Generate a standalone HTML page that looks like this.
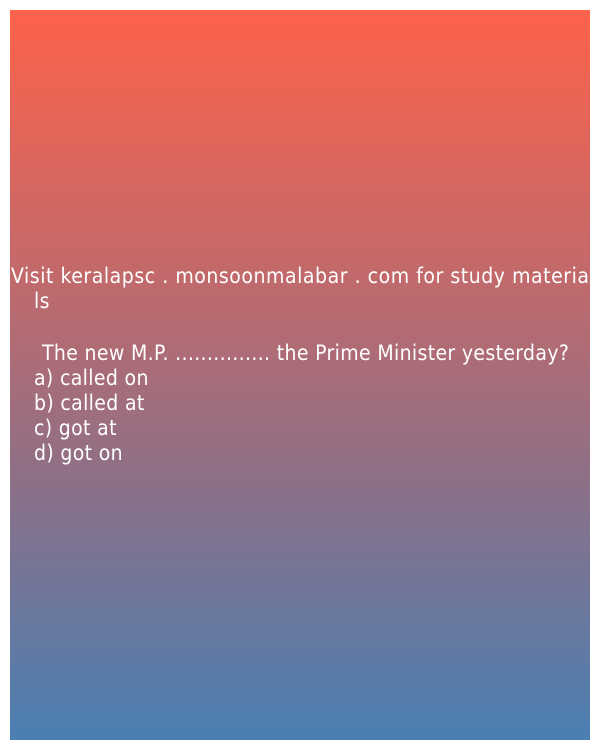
<!DOCTYPE html>
<html><head><style>
html,body{margin:0;padding:0;background:#fff;width:600px;height:750px;overflow:hidden}
.box{position:absolute;left:10px;top:10px;width:580px;height:730px;background:linear-gradient(to bottom,#fd624a 0%,#c4696a 35%,#8c7088 65%,#4a7fb2 100%)}
.l{position:absolute;color:#fff;font-family:"Liberation Sans Narrow","DejaVu Sans Condensed","Liberation Sans",sans-serif;font-size:21px;line-height:25px;white-space:nowrap;letter-spacing:0.35px}
</style></head><body>
<div class="box"></div>
<div class="l" style="left:11px;top:264px;letter-spacing:0.55px">Visit keralapsc . monsoonmalabar . com for study materia</div>
<div class="l" style="left:34px;top:289px">ls</div>
<div class="l" style="left:42px;top:341px">The new M.P. ............... the Prime Minister yesterday?</div>
<div class="l" style="left:34px;top:366px">a) called on</div>
<div class="l" style="left:34px;top:391px">b) called at</div>
<div class="l" style="left:34px;top:416px">c) got at</div>
<div class="l" style="left:34px;top:441px">d) got on</div>
</body></html>
